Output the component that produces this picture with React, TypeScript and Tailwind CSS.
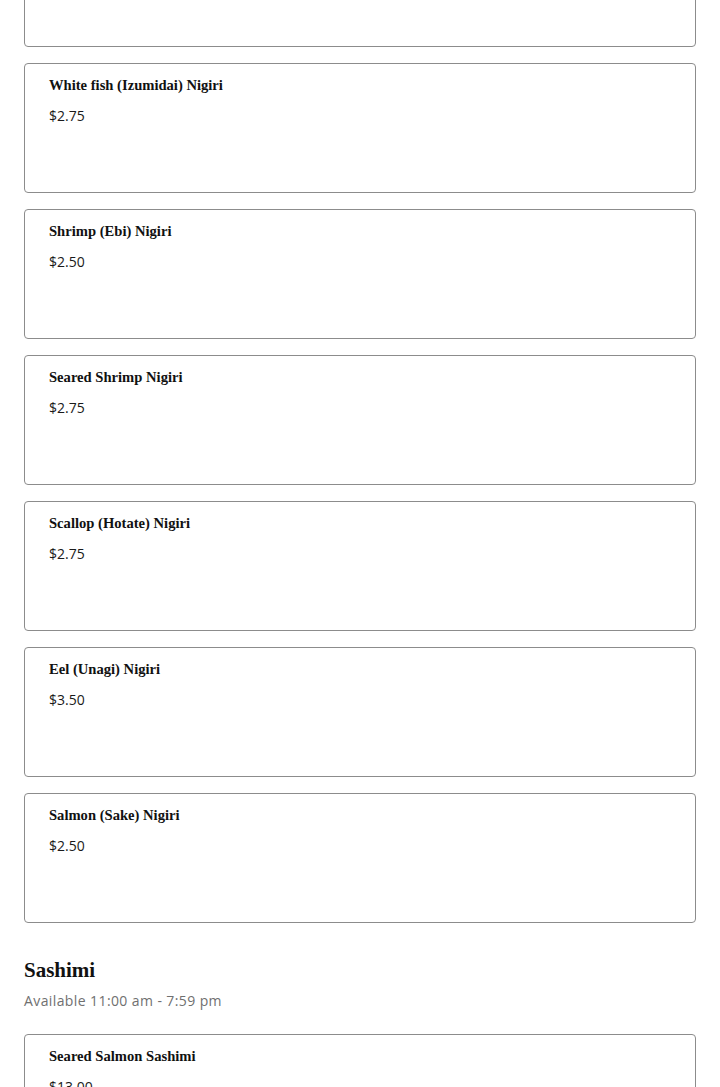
const nigiri = [
  { name: "White fish (Izumidai) Nigiri", price: "$2.75" },
  { name: "Shrimp (Ebi) Nigiri", price: "$2.50" },
  { name: "Seared Shrimp Nigiri", price: "$2.75" },
  { name: "Scallop (Hotate) Nigiri", price: "$2.75" },
  { name: "Eel (Unagi) Nigiri", price: "$3.50" },
  { name: "Salmon (Sake) Nigiri", price: "$2.50" },
];

const MenuCard = ({ name, price }: { name: string; price: string }) => (
  <div className="h-[130px] rounded-[4px] border border-[#8c8c8c] bg-white px-6 pt-[11px]">
    <h3 className="font-['Liberation_Serif',serif] text-[14.6px] font-bold leading-[20px] text-[#111]">{name}</h3>
    <p className="mt-[11px] font-['Open_Sans',sans-serif] text-[14px] leading-[20px] text-[#1a1a1a]">{price}</p>
  </div>
);

export default function App() {
  return (
    <div className="h-[1087px] overflow-hidden bg-white px-6">
      <div className="flex flex-col gap-4">
        {/* previous card, scrolled mostly out of view */}
        <div className="-mt-[83px] h-[130px] rounded-[4px] border border-[#8c8c8c] bg-white" />
        {nigiri.map((item) => (
          <MenuCard key={item.name} {...item} />
        ))}
      </div>

      <section className="mt-[33px]">
        <h2 className="font-['Liberation_Serif',serif] text-[21px] font-bold leading-[28px] text-[#111]">Sashimi</h2>
        <p className="mt-[7px] font-['Open_Sans',sans-serif] text-[14px] leading-[20px] tracking-[0.4px] text-[#707070]">
          Available 11:00 am - 7:59 pm
        </p>
        <div className="mt-[23px]">
          <MenuCard name="Seared Salmon Sashimi" price="$13.00" />
        </div>
      </section>
    </div>
  );
}
